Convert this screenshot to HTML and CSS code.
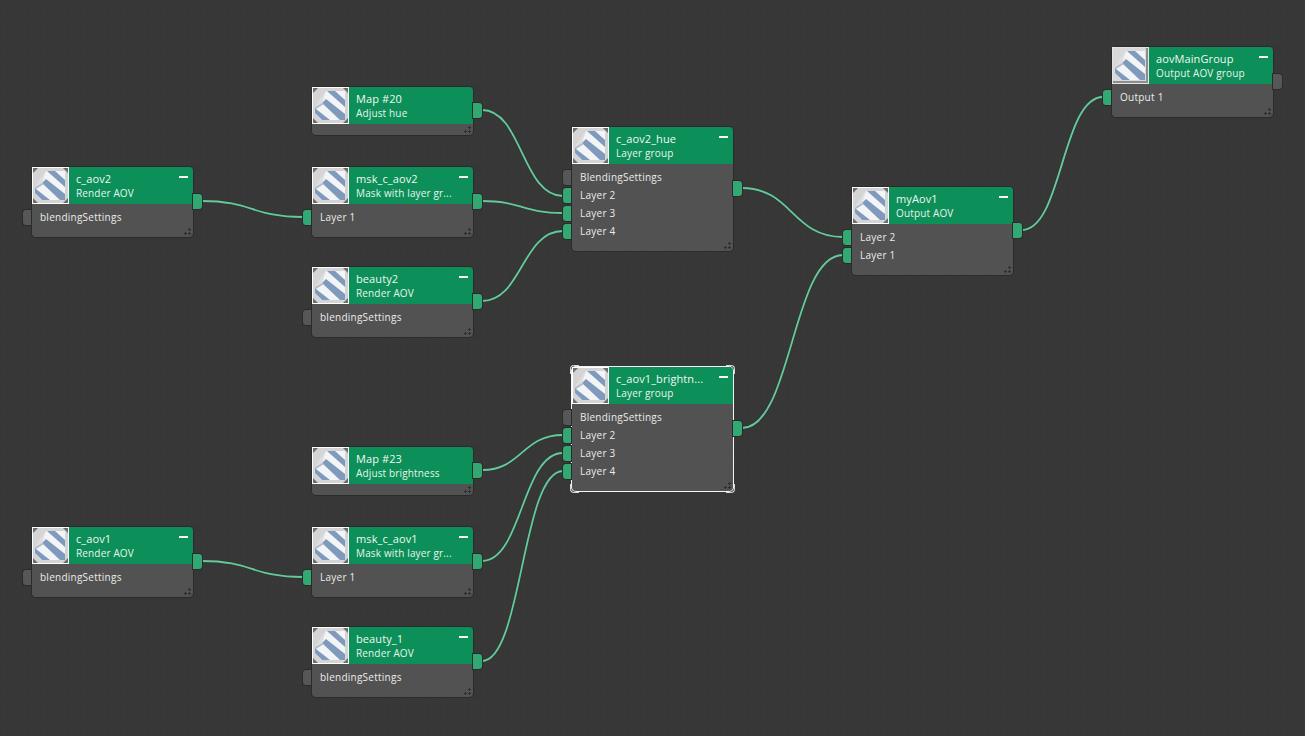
FILE: index.html
```html
<!DOCTYPE html>
<html lang="en">
<head>
<meta charset="utf-8">
<title>AOV node graph</title>
<link rel="stylesheet" href="styles.css">
</head>
<body>
<main class="canvas">
  <svg class="defs" width="0" height="0" aria-hidden="true">
    <symbol id="sheet" viewBox="0 0 35 35">
      <path d="M2 19 13 3H32V32H8L2 25z" fill="#f3f4f6"/>
      <path d="M14 3h8l10 9v7zM9 15l4-4 19 15v6h-5zM2 19l1 2 14 11H9l-7-7z" fill="#7f9abd"/>
      <path d="M2 19 13 3l-4 12z" fill="#dedede"/>
      <path d="M9 15 2 19l1 2 8-5z" fill="#b4bdcb"/>
    </symbol>
    <symbol id="swatch" viewBox="0 0 35 35">
      <rect width="35" height="35" fill="#d4d4d4"/>
      <path d="M0 0h5L0 5zM35 0v5l-5-5zM0 35v-5l5 5zM35 35h-5l5-5z" fill="#6e6e6e"/>
      <use href="#sheet"/>
    </symbol>
    <symbol id="swatch-plain" viewBox="0 0 35 35">
      <rect width="35" height="35" fill="#d9d9d9"/>
      <path d="M33 0h2v35H0v-2h33z" fill="#8d8d8d"/>
      <use href="#sheet"/>
    </symbol>
  </svg>

  <svg class="wires" width="1305" height="736" viewBox="0 0 1305 736" aria-hidden="true">
    <g class="wire-shadow">
      <path id="w1" d="M202 201C252 201 252 217 303 217"/>
      <path id="w2" d="M482 110C522 110 522 196 563 196"/>
      <path id="w3" d="M482 201C522 201 522 213 563 213"/>
      <path id="w4" d="M482 301C522 301 522 231 563 231"/>
      <path id="w5" d="M742 188C792 188 792 237 843 237"/>
      <path id="w6" d="M482 470C522 470 522 435 563 435"/>
      <path id="w7" d="M482 561C522 561 522 453 563 453"/>
      <path id="w8" d="M482 661C522 661 522 471 563 471"/>
      <path id="w9" d="M742 428C792 428 792 255 843 255"/>
      <path id="w10" d="M202 561C252 561 252 577 303 577"/>
      <path id="w11" d="M1022 230C1062 230 1062 97 1103 97"/>
    </g>
    <g class="wire-line">
      <use href="#w1"/><use href="#w2"/><use href="#w3"/><use href="#w4"/>
      <use href="#w5"/><use href="#w6"/><use href="#w7"/><use href="#w8"/>
      <use href="#w9"/><use href="#w10"/><use href="#w11"/>
    </g>
  </svg>

  <article class="node at-c-aov2">
    <header class="head">
      <svg class="thumb"><use href="#swatch"/></svg>
      <div class="labels"><div class="name">c_aov2</div><div class="kind">Render AOV</div></div>
      <span class="minus"></span>
    </header>
    <div class="rows"><div class="row"><i class="port in off"></i>blendingSettings</div></div>
    <footer class="foot"><span class="grip"></span></footer>
    <i class="port out"></i>
  </article>

  <article class="node at-map20">
    <header class="head">
      <svg class="thumb"><use href="#swatch"/></svg>
      <div class="labels"><div class="name">Map #20</div><div class="kind">Adjust hue</div></div>
    </header>
    <footer class="foot"><span class="grip"></span></footer>
    <i class="port out"></i>
  </article>

  <article class="node at-msk2">
    <header class="head">
      <svg class="thumb"><use href="#swatch"/></svg>
      <div class="labels"><div class="name">msk_c_aov2</div><div class="kind">Mask with layer gr...</div></div>
      <span class="minus"></span>
    </header>
    <div class="rows"><div class="row"><i class="port in"></i>Layer 1</div></div>
    <footer class="foot"><span class="grip"></span></footer>
    <i class="port out"></i>
  </article>

  <article class="node at-beauty2">
    <header class="head">
      <svg class="thumb"><use href="#swatch"/></svg>
      <div class="labels"><div class="name">beauty2</div><div class="kind">Render AOV</div></div>
      <span class="minus"></span>
    </header>
    <div class="rows"><div class="row"><i class="port in off"></i>blendingSettings</div></div>
    <footer class="foot"><span class="grip"></span></footer>
    <i class="port out"></i>
  </article>

  <article class="node at-hue">
    <header class="head">
      <svg class="thumb"><use href="#swatch"/></svg>
      <div class="labels"><div class="name">c_aov2_hue</div><div class="kind">Layer group</div></div>
      <span class="minus"></span>
    </header>
    <div class="rows">
      <div class="row"><i class="port in off"></i>BlendingSettings</div>
      <div class="row"><i class="port in"></i>Layer 2</div>
      <div class="row"><i class="port in"></i>Layer 3</div>
      <div class="row"><i class="port in"></i>Layer 4</div>
    </div>
    <footer class="foot"><span class="grip"></span></footer>
    <i class="port out"></i>
  </article>

  <article class="node at-my">
    <header class="head">
      <svg class="thumb"><use href="#swatch"/></svg>
      <div class="labels"><div class="name">myAov1</div><div class="kind">Output AOV</div></div>
      <span class="minus"></span>
    </header>
    <div class="rows">
      <div class="row"><i class="port in"></i>Layer 2</div>
      <div class="row"><i class="port in"></i>Layer 1</div>
    </div>
    <footer class="foot"><span class="grip"></span></footer>
    <i class="port out"></i>
  </article>

  <article class="node at-main">
    <header class="head">
      <svg class="thumb bare"><use href="#swatch-plain"/></svg>
      <div class="labels"><div class="name">aovMainGroup</div><div class="kind">Output AOV group</div></div>
      <span class="minus"></span>
    </header>
    <div class="rows"><div class="row"><i class="port in"></i>Output 1</div></div>
    <footer class="foot"><span class="grip"></span></footer>
    <i class="port out off"></i>
  </article>

  <article class="node selected at-bright">
    <header class="head">
      <svg class="thumb"><use href="#swatch"/></svg>
      <div class="labels"><div class="name">c_aov1_brightn...</div><div class="kind">Layer group</div></div>
      <span class="minus"></span>
    </header>
    <div class="rows">
      <div class="row"><i class="port in off"></i>BlendingSettings</div>
      <div class="row"><i class="port in"></i>Layer 2</div>
      <div class="row"><i class="port in"></i>Layer 3</div>
      <div class="row"><i class="port in"></i>Layer 4</div>
    </div>
    <footer class="foot"><span class="grip"></span></footer>
    <i class="port out"></i>
    <span class="corner tl"></span><span class="corner tr"></span><span class="corner bl"></span><span class="corner br"></span>
  </article>

  <article class="node at-map23">
    <header class="head">
      <svg class="thumb"><use href="#swatch"/></svg>
      <div class="labels"><div class="name">Map #23</div><div class="kind">Adjust brightness</div></div>
    </header>
    <footer class="foot"><span class="grip"></span></footer>
    <i class="port out"></i>
  </article>

  <article class="node at-c-aov1">
    <header class="head">
      <svg class="thumb"><use href="#swatch"/></svg>
      <div class="labels"><div class="name">c_aov1</div><div class="kind">Render AOV</div></div>
      <span class="minus"></span>
    </header>
    <div class="rows"><div class="row"><i class="port in off"></i>blendingSettings</div></div>
    <footer class="foot"><span class="grip"></span></footer>
    <i class="port out"></i>
  </article>

  <article class="node at-msk1">
    <header class="head">
      <svg class="thumb"><use href="#swatch"/></svg>
      <div class="labels"><div class="name">msk_c_aov1</div><div class="kind">Mask with layer gr...</div></div>
      <span class="minus"></span>
    </header>
    <div class="rows"><div class="row"><i class="port in"></i>Layer 1</div></div>
    <footer class="foot"><span class="grip"></span></footer>
    <i class="port out"></i>
  </article>

  <article class="node at-beauty1">
    <header class="head">
      <svg class="thumb"><use href="#swatch"/></svg>
      <div class="labels"><div class="name">beauty_1</div><div class="kind">Render AOV</div></div>
      <span class="minus"></span>
    </header>
    <div class="rows"><div class="row"><i class="port in off"></i>blendingSettings</div></div>
    <footer class="foot"><span class="grip"></span></footer>
    <i class="port out"></i>
  </article>
</main>
</body>
</html>
```
FILE: styles.css
```css
* { box-sizing: border-box; }

html, body {
  margin: 0;
  height: 100%;
  overflow: hidden;
  background: #373737;
}

.canvas {
  position: relative;
  width: 1305px;
  height: 736px;
  background-color: #373737;
  background-image:
    linear-gradient(90deg, #393939 1px, transparent 1px),
    linear-gradient(#393939 1px, transparent 1px);
  background-size: 20px 20px;
  background-position: 4px 2px;
  font-family: "Open Sans", "Noto Sans", sans-serif;
  font-size: 10px;
  letter-spacing: .25px;
  color: #ececec;
}

.defs { position: absolute; }

.wires { position: absolute; inset: 0; }
.wires path, .wires use { fill: none; }
.wire-shadow { stroke: #2a3a32; stroke-width: 3.2; }
.wire-line { stroke: #68c89c; stroke-width: 1.8; }

/* nodes sit on a free canvas: their place is the content */
.node {
  position: absolute;
  width: 161px;
  display: flex;
  flex-direction: column;
  background: #525252;
  border-radius: 4px;
  box-shadow: 0 0 0 1px #2b2b2b;
}
.at-c-aov2  { left: 32px;   top: 167px; }
.at-map20   { left: 312px;  top: 87px; }
.at-msk2    { left: 312px;  top: 167px; }
.at-beauty2 { left: 312px;  top: 267px; }
.at-hue     { left: 572px;  top: 127px; }
.at-my      { left: 852px;  top: 187px; }
.at-main    { left: 1112px; top: 47px; }
.at-bright  { left: 572px;  top: 367px; }
.at-map23   { left: 312px;  top: 447px; }
.at-c-aov1  { left: 32px;   top: 527px; }
.at-msk1    { left: 312px;  top: 527px; }
.at-beauty1 { left: 312px;  top: 627px; }

.selected { box-shadow: 0 0 0 1px #f4f4f4; }

.head {
  position: relative;
  display: flex;
  align-items: center;
  height: 37px;
  background: #0c8f58;
  border-radius: 4px 4px 0 0;
}

.thumb {
  flex: none;
  width: 37px;
  height: 37px;
  border: 1px solid #fff;
  background: #fff;
}
.thumb.bare { border-color: #e4e4e4; }

.labels {
  padding-left: 7px;
  display: flex;
  flex-direction: column;
  line-height: 14px;
}
.name { font-size: 11px; letter-spacing: .1px; color: #f2f8f4; }
.kind { font-size: 10px; letter-spacing: .15px; color: #e8f5ee; }

.minus {
  position: absolute;
  top: 9px;
  right: 5px;
  width: 9px;
  height: 2px;
  background: #f4f4f4;
}

.rows {
  padding-top: 4px;
  display: flex;
  flex-direction: column;
}

.row {
  position: relative;
  height: 18px;
  padding-left: 8px;
  line-height: 18px;
  white-space: nowrap;
}

.foot {
  position: relative;
  height: 11px;
}

.grip {
  position: absolute;
  right: 2px;
  bottom: 2px;
  width: 7px;
  height: 7px;
  background:
    radial-gradient(circle at 1.5px 5.5px, #2e2e2e 1.2px, transparent 1.3px),
    radial-gradient(circle at 5.5px 5.5px, #2e2e2e 1.2px, transparent 1.3px),
    radial-gradient(circle at 5.5px 1.5px, #2e2e2e 1.2px, transparent 1.3px);
}

.port {
  position: absolute;
  display: block;
  height: 15px;
  background: #32a873;
  box-shadow: 0 0 0 1px #2b2b2b;
}
.port.off { background: #575757; }
.port.in {
  left: -9px;
  top: 2px;
  width: 8px;
  border-radius: 3px 0 0 3px;
}
.port.out {
  right: -9px;
  top: calc(50% - 8px);
  width: 9px;
  border-radius: 0 3px 3px 0;
}

.corner {
  position: absolute;
  width: 9px;
  height: 9px;
  border: 0 solid #d8d8d8;
}
.corner.tl { left: -2px; top: -2px; border-width: 1px 0 0 1px; border-radius: 4px 0 0 0; }
.corner.tr { right: -2px; top: -2px; border-width: 1px 1px 0 0; border-radius: 0 4px 0 0; }
.corner.bl { left: -2px; bottom: -2px; border-width: 0 0 1px 1px; border-radius: 0 0 0 4px; }
.corner.br { right: -2px; bottom: -2px; border-width: 0 1px 1px 0; border-radius: 0 0 4px 0; }
```
